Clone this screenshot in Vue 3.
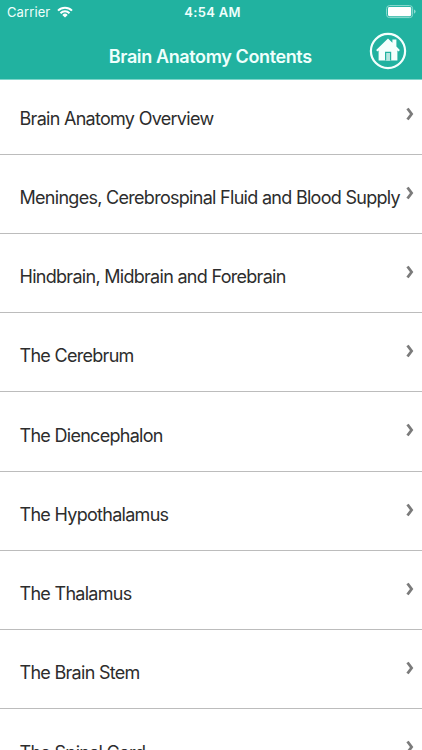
<template>
  <div class="screen">
    <header class="header">
      <div class="status">
        <div class="carrier">
          <span>Carrier</span>
          <svg class="wifi" viewBox="0 0 16 12" aria-hidden="true">
            <path d="M1 4.6a10 10 0 0 1 14 0M3.5 7.2a6.4 6.4 0 0 1 9 0" />
            <path class="dot" d="M5.3 8.9a3.9 3.9 0 0 1 5.4 0L8 11.6z" />
          </svg>
        </div>
        <span class="time">4:54 AM</span>
        <svg class="battery" viewBox="0 0 30 14" aria-hidden="true">
          <rect class="shell" x="0.6" y="0.6" width="26" height="12" rx="3" />
          <rect x="2" y="2" width="23.2" height="9.2" rx="1.4" />
          <path class="cap" d="M28 4.5q1.6.5 1.6 2.1T28 8.7z" />
        </svg>
      </div>

      <div class="bar">
        <h1 class="title">Brain Anatomy Contents</h1>
        <button class="home" type="button" aria-label="Home">
          <svg viewBox="0 0 38 38" aria-hidden="true">
            <circle cx="19" cy="19" r="17.1" />
            <path d="M19 6.4l4.4 4.3V7.6h4v6.9l3.4 3.6-1 1.3-1.4-.8v9.9H9.6v-9.9l-1.4.8-1-1.3z" />
            <path class="door" d="M16.6 28.6v-8.3h5v8.3" />
          </svg>
        </button>
      </div>
    </header>

    <ul class="list">
      <li v-for="topic in topics" :key="topic" class="row">
        <span class="label">{{ topic }}</span>
        <svg class="chevron" viewBox="0 0 8 14" aria-hidden="true">
          <path d="M1.5 1.5L5.6 7l-4.1 5.5" />
        </svg>
      </li>
    </ul>
  </div>
</template>

<script setup>
const topics = [
  "Brain Anatomy Overview",
  "Meninges, Cerebrospinal Fluid and Blood Supply",
  "Hindbrain, Midbrain and Forebrain",
  "The Cerebrum",
  "The Diencephalon",
  "The Hypothalamus",
  "The Thalamus",
  "The Brain Stem",
  "The Spinal Cord",
];
</script>

<style>
body {
  margin: 0;
  overflow: hidden;
}
</style>

<style scoped>
.screen {
  height: 750px;
  overflow: hidden;
  background: #fff;
  color: #2d2d2d;
  font-family: Inter, "Liberation Sans", sans-serif;
}

.header {
  box-sizing: border-box;
  height: 79.6px;
  background: #21b2a0;
  border-bottom: 1px solid #7ed5ca;
  color: #effffc;
}

.status {
  display: grid;
  grid-template-columns: 1fr auto 1fr;
  align-items: center;
  height: 24px;
  padding: 0 6px 0 7px;
  font-size: 13px;
}

.carrier {
  display: flex;
  align-items: center;
  gap: 7px;
  letter-spacing: 0.1px;
}

.wifi {
  width: 16px;
  height: 12px;
  fill: none;
  stroke: #fff;
  stroke-width: 2;
}

.wifi .dot {
  fill: #fff;
  stroke: none;
}

.time {
  padding-left: 2px;
  font-weight: 600;
  letter-spacing: 0.3px;
}

.battery {
  justify-self: end;
  width: 30px;
  height: 14px;
  fill: #fff;
}

.battery .shell {
  fill: none;
  stroke: #8fdbd1;
}

.battery .cap {
  fill: #8fdbd1;
}

.bar {
  display: grid;
  grid-template-columns: 52px 1fr 53.5px;
  align-items: center;
  height: 54px;
}

.title {
  grid-column: 2;
  margin: 11px 0 0;
  font-size: 18px;
  font-weight: 600;
  line-height: 24px;
  letter-spacing: -0.38px;
  text-align: center;
  white-space: nowrap;
}

.home {
  width: 38px;
  height: 38px;
  padding: 0;
  border: 0;
  background: none;
}

.home svg {
  display: block;
  fill: #f4fffd;
}

.home circle {
  fill: none;
  stroke: #f4fffd;
  stroke-width: 2.2;
}

.home .door {
  fill: #b5e6df;
  stroke: #21b2a0;
  stroke-width: 1.2;
}

.list {
  margin: 0;
  padding: 0;
  list-style: none;
}

.row {
  box-sizing: border-box;
  display: flex;
  align-items: flex-end;
  justify-content: space-between;
  height: 79.22px;
  padding: 0 8.5px 23px 19.5px;
  border-bottom: 1px solid #bcbcbc;
}

.row:first-child {
  height: 75.2px;
}

.label {
  font-size: 18px;
  line-height: 24px;
  letter-spacing: -0.71px;
  white-space: nowrap;
}

.chevron {
  flex: none;
  width: 8px;
  height: 14px;
  margin-bottom: 10.2px;
  fill: none;
  stroke: #7b7b7b;
  stroke-width: 2.8;
}
</style>
